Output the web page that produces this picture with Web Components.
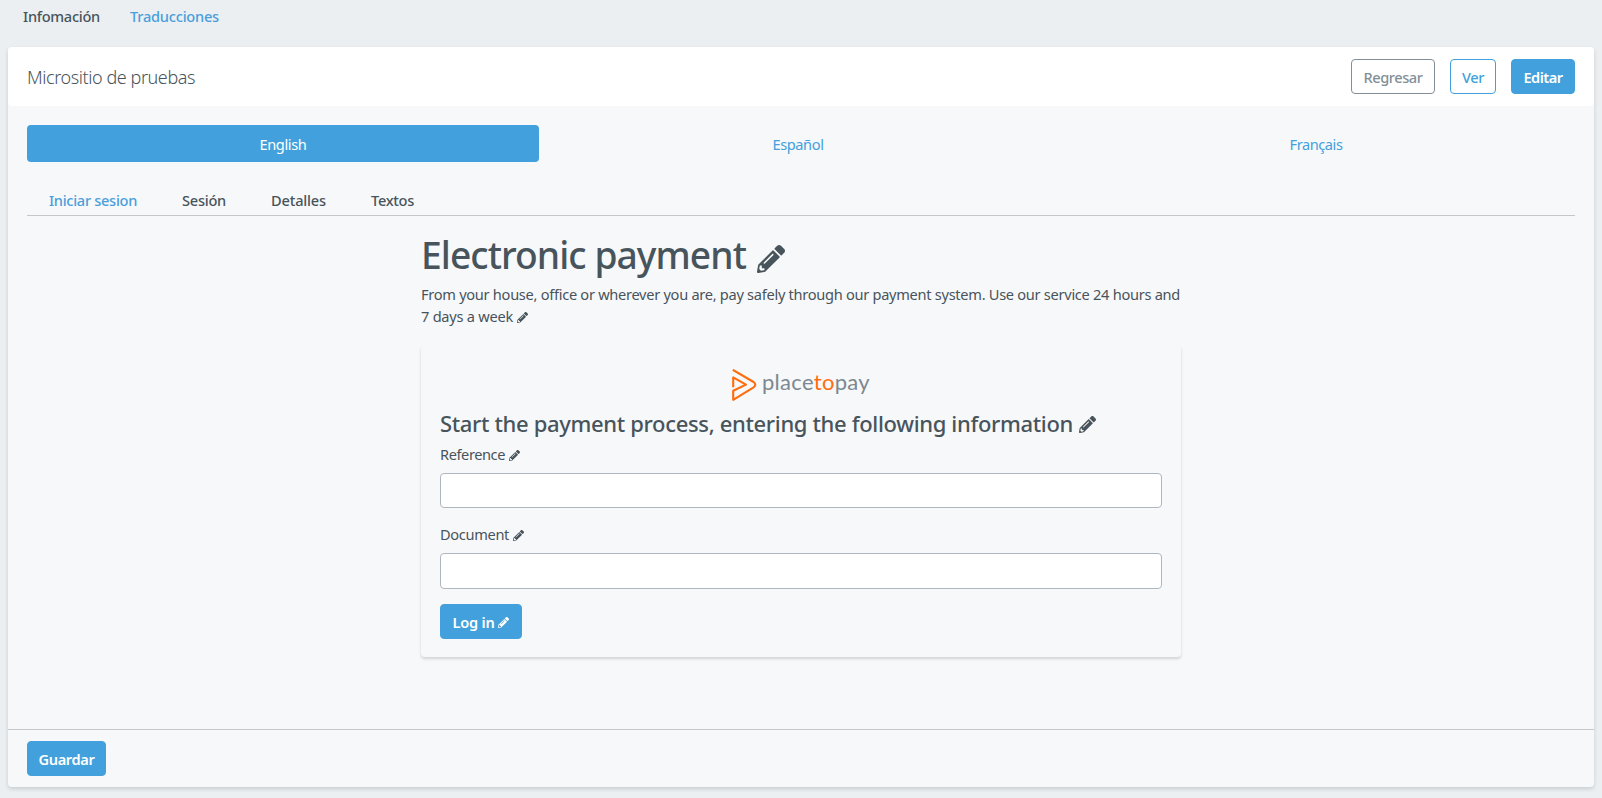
<!DOCTYPE html>
<html lang="es">
<head>
<meta charset="utf-8">
<title>Micrositio de pruebas</title>
<style>
html,body{margin:0;height:100%}
body{background:#ebeff2;color:#48545b;font:14.6px/22px "Noto Sans","Open Sans",sans-serif;overflow:hidden}
</style>
</head>
<body>
<microsite-page></microsite-page>
<script>
const define = (name, html, setup) => {
  const template = document.createElement('template');
  template.innerHTML = html;
  customElements.define(name, class extends HTMLElement {
    connectedCallback() {
      if (this.shadowRoot) return;
      this.attachShadow({ mode: 'open' }).append(template.content.cloneNode(true));
      if (setup) setup(this, this.shadowRoot);
    }
  });
};

// Text whose tracking adapts to a given measure.
define('fit-text', `<style>:host{display:inline-block;white-space:nowrap}</style><slot></slot>`, el => {
  const target = +el.getAttribute('w');
  const natural = el.getBoundingClientRect().width;
  el.style.letterSpacing = (target - natural) / el.textContent.length + 'px';
});

define('pencil-icon', `<style>
:host{display:inline-block;width:var(--s,11px);height:var(--s,11px);flex:none}svg{display:block;width:100%;height:100%}
</style><svg viewBox="0 0 512 512" fill="currentColor"><path d="M497.9 142.1l-46.1 46.1c-4.7 4.7-12.3 4.7-17 0l-111-111c-4.7-4.7-4.7-12.3 0-17l46.1-46.1c18.7-18.7 49.1-18.7 67.9 0l60.1 60.1c18.8 18.7 18.8 49.1 0 67.9zM284.2 99.8L21.6 362.4.4 483.9c-2.9 16.4 11.4 30.6 27.8 27.8l121.5-21.3 262.6-262.6c4.7-4.7 4.7-12.3 0-17l-111-111c-4.8-4.7-12.4-4.7-17.1 0zM124.1 339.9c-5.5-5.5-5.5-14.3 0-19.8l154-154c5.5-5.5 14.3-5.5 19.8 0s5.5 14.3 0 19.8l-154 154c-5.5 5.5-14.3 5.5-19.8 0zM88 424h48v36.3l-64.5 11.3-31.1-31.1L51.7 376H88v48z"/></svg>`);

define('ui-button', `<style>
:host{display:inline-flex;box-sizing:border-box;height:35px;border:1px solid #42a1dc;border-radius:4px;background:#42a1dc;color:#fff;font-weight:600;align-items:center;justify-content:center;padding-top:1px}
:host([outline]){background:#fff;color:#42a1dc;font-weight:500}
:host([outline=gray]){color:#828f99;border-color:#828f99}
</style><slot></slot>`);

define('text-field', `<style>
:host{display:block}
label{display:flex;height:22px}
label ::slotted(pencil-icon){margin:7px 0 0 4px}
input{display:block;box-sizing:border-box;width:100%;height:var(--h,35px);margin:var(--gap,8px) 0 0;border:1px solid #aeb7bf;border-radius:4px;background:#fff;outline:0}
</style><label><slot></slot></label><input type="text">`);

define('brand-logo', `<style>
:host{display:flex;height:32px;justify-content:center;font:400 22px/25px Lato,sans-serif;color:#7d8890}
svg{width:25px;height:32px;margin-right:5px;flex:none}
b{font-weight:400;color:#ff6c0c}
</style><svg viewBox="0 0 25 32" fill="none" stroke="#ff6c0c" stroke-width="2.1" stroke-linejoin="round"><path d="M.8 .8l20.8 12.2q3.4 2.6 0 5.3L1.2 30.8v-9L14 15.6 1.2 8.4v9.8"/></svg><fit-text w="108">place<b>to</b>pay</fit-text>`);

define('top-nav', `<style>
:host{display:flex;height:47px;line-height:33px;padding-left:23px;gap:30px;font-weight:500}
.on{color:#4a9edb}
</style><fit-text w="77">Infomación</fit-text><fit-text class="on" w="89">Traducciones</fit-text>`);

define('card-header', `<style>
:host{display:flex;box-sizing:border-box;height:59px;background:#fff;border-radius:4px;padding:0 19px;align-items:center;gap:15px}
h2{margin:1px auto 0 0;font-size:18px;line-height:26px;font-weight:300}
</style><h2><fit-text w="168">Micrositio de pruebas</fit-text></h2>
<ui-button outline="gray" style="width:84px"><fit-text w="59">Regresar</fit-text></ui-button>
<ui-button outline style="width:46px"><fit-text w="22">Ver</fit-text></ui-button>
<ui-button style="width:64px"><fit-text w="39">Editar</fit-text></ui-button>`);

define('language-pills', `<style>
:host{display:grid;grid-template-columns:512px 1fr 1fr;margin-top:19px}
div{height:36px;padding-top:1px;display:flex;align-items:center;justify-content:center;border-radius:4px;color:#42a1dc}
.on{background:#42a1dc;color:#fff}
</style><div class="on"><fit-text w="47">English</fit-text></div><div><fit-text w="51">Español</fit-text></div><div><fit-text w="53">Français</fit-text></div>`);

define('section-tabs', `<style>
:host{display:flex;margin-top:23px;height:30px;line-height:30px;padding-left:22px;gap:45px;border-bottom:1px solid #c5c8cb;font-weight:500}
.on{color:#4a9edb}
</style><fit-text class="on" w="88">Iniciar sesion</fit-text><fit-text w="44">Sesión</fit-text><fit-text w="55">Detalles</fit-text><fit-text w="43">Textos</fit-text>`);

define('login-card', `<style>
:host{display:block;box-sizing:border-box;height:312px;margin-top:18px;padding:24px 19px 0;border-radius:4px;box-shadow:0 2px 3px rgba(0,0,0,.15)}
h4{display:flex;margin:7px 0 5px;font-size:22px;line-height:30px;font-weight:500}
h4 pencil-icon{--s:17px;margin:8px 0 0 6px}
.second{margin-top:15px;--gap:8px;--h:36px}
ui-button{margin-top:15px;width:82px;gap:3px;padding:0 1px 0 0}
ui-button pencil-icon{margin-top:2px}
</style><brand-logo></brand-logo>
<h4><fit-text w="633">Start the payment process, entering the following information</fit-text><pencil-icon></pencil-icon></h4>
<text-field><fit-text w="65">Reference</fit-text><pencil-icon></pencil-icon></text-field>
<text-field class="second"><fit-text w="69">Document</fit-text><pencil-icon></pencil-icon></text-field>
<ui-button><fit-text w="42">Log in</fit-text><pencil-icon></pencil-icon></ui-button>`);

define('payment-preview', `<style>
:host{display:block;width:760px;margin:15px auto 0}
h1{display:flex;margin:0;font-size:37.2px;line-height:48px;font-weight:500}
h1 pencil-icon{--s:28px;margin:14px 0 0 11px}
.line{display:flex}
.copy{margin-top:4px}
.copy pencil-icon{margin:7px 0 0 4px}
</style><h1><fit-text w="325">Electronic payment</fit-text><pencil-icon></pencil-icon></h1>
<div class="copy"><div class="line"><fit-text w="759">From your house, office or wherever you are, pay safely through our payment system. Use our service 24 hours and</fit-text></div>
<div class="line"><fit-text w="92">7 days a week</fit-text><pencil-icon></pencil-icon></div></div>
<login-card></login-card>`);

define('microsite-page', `<style>
:host{display:block}
main{display:flex;flex-direction:column;box-sizing:border-box;height:740px;margin:0 8px;background:#f7f8fa;border-radius:4px;box-shadow:0 2px 4px rgba(0,0,0,.14)}
section{flex:1;padding:0 19px}
footer{box-sizing:border-box;height:58px;border-top:1px solid #c5c8cb;padding:11px 19px}
footer ui-button{padding-top:0}
</style><top-nav></top-nav>
<main><card-header></card-header>
<section><language-pills></language-pills><section-tabs></section-tabs><payment-preview></payment-preview></section>
<footer><ui-button style="width:79px"><fit-text w="56">Guardar</fit-text></ui-button></footer></main>`);
</script>
</body>
</html>
